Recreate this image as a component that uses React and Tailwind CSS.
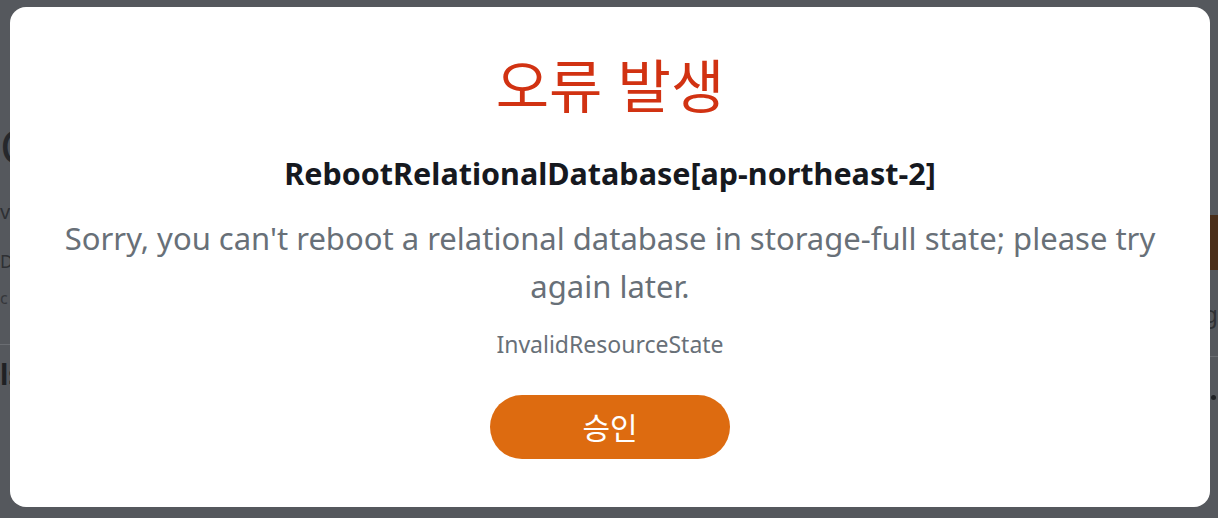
export default function App() {
  return (
    <div className="relative h-[518px] w-full overflow-hidden bg-[#55585d] font-['Noto_Sans','Noto_Sans_CJK_KR',sans-serif]">
      {/* page behind the dimmed overlay */}
      <div className="flex h-full justify-between">
        <div className="flex flex-col text-[#26282c]">
          <div className="mt-[118px] text-[48px] leading-[56px]">C</div>
          <div className="mt-[26px] text-[20px] leading-[24px] text-[#2e3034]">v</div>
          <div className="mt-[26px] text-[18px] leading-[22px] text-[#2e3034]">D</div>
          <div className="mt-[16px] text-[16px] leading-[20px] text-[#35373b]">c</div>
          <div className="mt-[36px] h-px w-[20px] bg-[#6a6d72]" />
          <div className="mt-[14px] text-[28px] font-bold leading-[30px] text-[#1f2124]">ls</div>
        </div>
        <div className="flex flex-col items-end">
          <div className="mt-[215px] h-[55px] w-[10px] bg-[#4a2e1a]" />
          <div className="mt-[30px] text-[24px] leading-[28px] text-[#2e3034]">g</div>
          <div className="mt-[28px] h-px w-[8px] bg-[#6a6d72]" />
          <div className="mt-[38px] mr-[2px] h-[5px] w-[5px] rounded-full bg-[#1f2124]" />
        </div>
      </div>

      {/* modal */}
      <div className="absolute left-[10px] top-[7px] flex h-[500px] w-[1200px] flex-col items-center rounded-[16px] bg-white px-[40px] text-center">
        <h1 className="mt-[41px] text-[58px] leading-[76px] text-[#d13212]">오류 발생</h1>
        <h2 className="mt-[29px] text-[30.5px] font-bold leading-[40px] text-[#16191f]">
          RebootRelationalDatabase[ap-northeast-2]
        </h2>
        <p className="mt-[21px] text-[31px] leading-[48px] text-[#687078]">
          Sorry, you can't reboot a relational database in storage-full state; please try again later.
        </p>
        <p className="mt-[18px] text-[23px] leading-[32px] text-[#687078]">InvalidResourceState</p>
        <button className="mt-[35px] h-[64px] w-[240px] rounded-full bg-[#dd6b10] text-[30px] text-white">
          승인
        </button>
      </div>
    </div>
  );
}
